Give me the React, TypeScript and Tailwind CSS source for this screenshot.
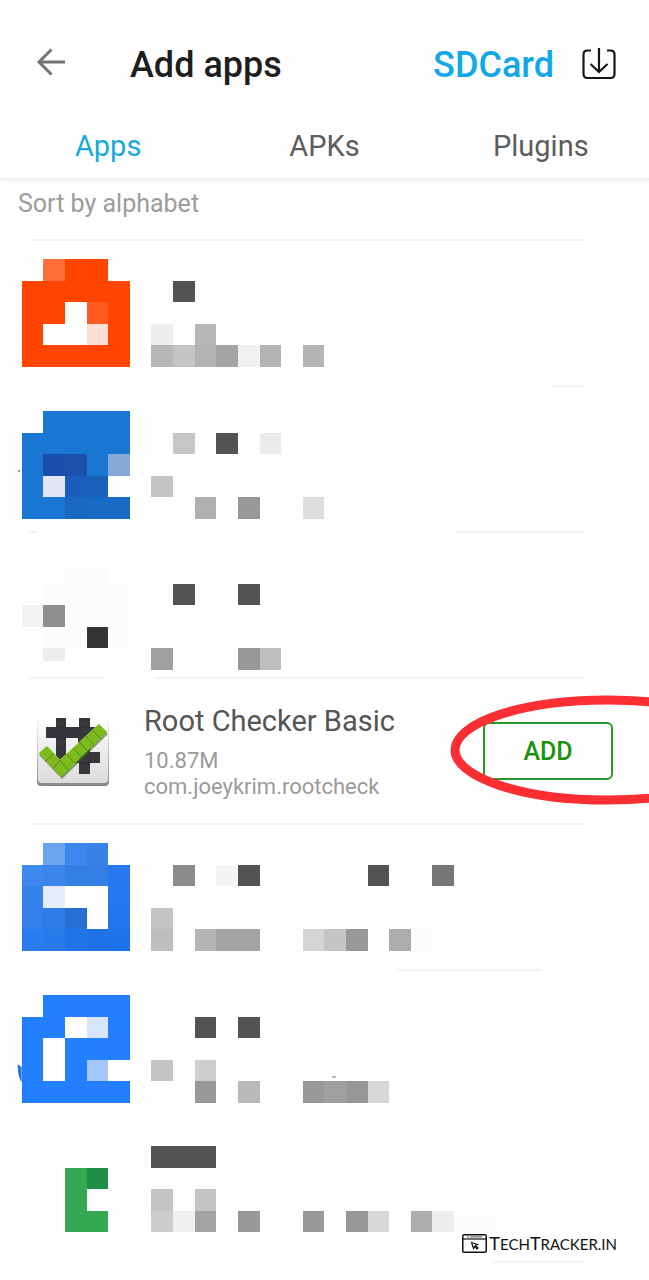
import React from "react";

type Cell = [col: number, row: number, fill: string, w?: number, h?: number];

type AppEntry = {
  id: string;
  pad: string;
  icon: Cell[];
  label: Cell[];
  divider: string;
  leadDivider?: string;
  nub?: string;
};

const CELL = 21.62;
const DARK = "#535353";
const ORANGE = "#ff4500";
const BLUE = "#1976d2";
const AZURE = "#237ffe";
const GREEN = "#34a853";

const firstApps: AppEntry[] = [
  {
    id: "a1",
    pad: "pt-[18px]",
    icon: [
      [1, 0, "#ff7038"], [2, 0, ORANGE, 2], [0, 1, ORANGE, 5, 4],
      [2, 2, "#fff"], [3, 2, "#ff5a1f"], [1, 3, "#fff", 2], [3, 3, "#fddfd6"],
    ],
    label: [
      [1, 1, DARK], [0, 3, "#eeeeee"], [2, 3, "#b7b7b7"],
      [0, 4, "#b7b7b7"], [1, 4, "#c4c4c4"], [2, 4, "#b3b3b3"], [3, 4, "#a3a3a3"],
      [4, 4, "#f1f1f1"], [5, 4, "#b5b5b5"], [7, 4, "#b5b5b5"],
    ],
    divider: "ml-auto w-8",
  },
  {
    id: "a2",
    pad: "pt-6",
    icon: [
      [1, 0, BLUE, 4], [0, 1, BLUE, 5, 4],
      [1, 2, "#1c4eae"], [2, 2, "#1b51ad"], [4, 2, "#88a8d8"],
      [1, 3, "#e3e7f5"], [2, 3, "#1b5eba"], [3, 3, "#1b60b9"], [4, 3, "#fefefe"],
      [2, 4, "#1a68c0"], [3, 4, "#196ac4", 2],
    ],
    label: [
      [1, 1, "#c6c6c6"], [3, 1, DARK], [5, 1, "#ebebeb"], [0, 3, "#c4c4c4"],
      [2, 4, "#b0b0b0"], [4, 4, "#989898"], [7, 4, "#dedede"],
    ],
    leadDivider: "w-2",
    divider: "ml-auto w-32",
    nub: "M-3.5 59h1.5v2h-1.5z",
  },
  {
    id: "a3",
    pad: "pt-[29px]",
    icon: [
      [2, 0, "#fcfcfc", 2], [1, 1, "#fcfcfc", 4], [2, 2, "#fcfcfc", 3],
      [1, 3, "#fcfcfc", 4], [0, 2, "#f3f3f3"], [1, 2, "#8e8e8e"],
      [3, 3, "#333333"], [1, 4, "#ededed", 1, 0.6],
    ],
    label: [
      [1, 1, DARK], [4, 1, DARK], [0, 4, "#a0a0a0"], [4, 4, "#989898"], [5, 4, "#bfbfbf"],
    ],
    leadDivider: "w-[74px]",
    divider: "ml-[53px] grow",
  },
];

const moreApps: AppEntry[] = [
  {
    id: "b1",
    pad: "pt-[18px]",
    icon: [
      [1, 0, "#6ba5f2"], [2, 0, "#3d88ec"], [3, 0, "#3781e9"],
      [0, 1, "#3d88ee"], [1, 1, "#3c85ea"], [2, 1, "#337fe6", 2], [4, 1, "#2678ef"],
      [0, 2, "#3681ea"], [1, 2, "#e7eefb"], [2, 2, "#fff", 2], [4, 2, "#2477ee"],
      [0, 3, "#3381ea"], [1, 3, "#2e7ce5"], [2, 3, "#276fd5"], [3, 3, "#fff"], [4, 3, "#2176ec"],
      [0, 4, "#2a7cee"], [1, 4, "#2a79ea"], [2, 4, "#2273e6"], [3, 4, "#2072e7"], [4, 4, "#1d73e9"],
    ],
    label: [
      [1, 1, "#8c8c8c"], [3, 1, "#f5f5f5"], [4, 1, DARK], [10, 1, DARK], [13, 1, "#777777"],
      [0, 3, "#c4c4c4"], [0, 4, "#bebebe"], [2, 4, "#b5b5b5"], [3, 4, "#a3a3a3", 2],
      [7, 4, "#d5d5d5"], [8, 4, "#c5c5c5"], [9, 4, "#989898"], [11, 4, "#adadad"], [12, 4, "#fcfcfc"],
    ],
    divider: "ml-auto mr-[43px] w-36",
  },
  {
    id: "b2",
    pad: "pt-6",
    icon: [
      [1, 0, AZURE, 4], [0, 1, AZURE, 5, 4],
      [2, 1, "#fff"], [3, 1, "#d7e5fb"], [1, 2, "#fff", 1, 2], [3, 3, "#a4c7fa"], [4, 3, "#fefefe"],
    ],
    label: [
      [2, 1, DARK], [4, 1, DARK], [0, 3, "#c4c4c4"], [2, 3, "#cecece"],
      [2, 4, "#989898"], [4, 4, "#b9b9b9"], [7, 4, "#989898"], [8, 4, "#a0a0a0"],
      [9, 4, "#979797"], [10, 4, "#d8d8d8"], [8.35, 3.75, "#b8b8b8", 0.2, 0.08],
    ],
    divider: "invisible w-0",
    nub: "M-4 69 L-1 71.500 H0 V87 C-3 84 -4 76 -4 69Z",
  },
  {
    id: "b3",
    pad: "pt-[29px]",
    icon: [
      [2, 1, GREEN, 1, 3], [3, 1, "#1f8e42"], [3, 3, GREEN],
    ],
    label: [
      [0, 0, DARK, 3], [0, 2, "#c4c4c4"], [2, 2, "#c4c4c4"],
      [0, 3, "#cdcdcd"], [1, 3, "#f0f0f0"], [2, 3, "#a3a3a3"], [4, 3, "#989898"],
      [7, 3, "#989898"], [9, 3, "#989898"], [10, 3, "#d8d8d8"], [12, 3, "#aeaeae"],
      [13, 3, "#ededed"], [14, 3, "#fcfcfc", 2],
    ],
    divider: "ml-auto w-[91px]",
  },
];

function Cells({ cells }: { cells: Cell[] }) {
  return (
    <g shapeRendering="crispEdges">
      {cells.map(([c, r, fill, w = 1, h = 1], i) => (
        <rect key={i} x={c * CELL} y={r * CELL} width={w * CELL} height={h * CELL} fill={fill} />
      ))}
    </g>
  );
}

function Divider({ lead, main }: { lead?: string; main: string }) {
  return (
    <div className="mr-[65px] ml-[29px] flex h-[2px]" aria-hidden="true">
      {lead && <span className={`bg-[#f3f3f3] ${lead}`} />}
      <span className={`bg-[#f3f3f3] ${main}`} />
    </div>
  );
}

function HiddenApp({ app }: { app: AppEntry }) {
  return (
    <li>
      <div className={`flex h-36 items-start gap-[21px] px-[22px] ${app.pad}`}>
        <svg className="size-[108px] shrink-0 overflow-visible" viewBox="0.3 0 108 108" aria-hidden="true">
          <Cells cells={app.icon} />
          {app.nub && <path d={app.nub} fill={app.id === "b2" ? "#2a78dc" : "#777"} />}
        </svg>
        <svg className="h-[108px] w-[346px] shrink-0" viewBox="-0.4 0 346 108" aria-hidden="true">
          <Cells cells={app.label} />
        </svg>
      </div>
      <Divider lead={app.leadDivider} main={app.divider} />
    </li>
  );
}

function RootCheckIcon() {
  return (
    <svg className="size-[74px] shrink-0" viewBox="0 0 74 74" aria-hidden="true">
      <defs>
        <linearGradient id="tile" x1="0" y1="0" x2="0" y2="1">
          <stop offset="0" stopColor="#ffffff" />
          <stop offset="1" stopColor="#dcdcdc" />
        </linearGradient>
        <linearGradient id="side" x1="0" y1="0" x2="0" y2="1">
          <stop offset="0" stopColor="#fafafa" />
          <stop offset="0.5" stopColor="#c8c8c8" />
          <stop offset="1" stopColor="#858585" />
        </linearGradient>
      </defs>
      <path d="M1 1H73V68Q73 72 69 72H5Q1 72 1 68Z" fill="url(#side)" />
      <path d="M2 1H72V65Q72 69 68 69H6Q2 69 2 65Z" fill="url(#tile)" />
      <path
        fillRule="evenodd"
        d="M20 4H30V13H43V4H54V13H62V24H54V38H64V49H54V60H43V49H20V24H10V13H20ZM30 24V40H42V24Z"
        fill="#35373b"
      />
      <path d="M20 13H30M43 13H54M20 24H30M20 34H30M43 49H54M54 38V49" stroke="#2a2c30" strokeWidth="0.700" />
      <path d="M3 41L11 33L25 48L63 12L72 20L26 65Z" fill="#3d6a10" opacity="0.600" />
      <path d="M3 39L11 32L24 46L63 10L71 18L25 63Z" fill="#7dba1d" />
      <path d="M11 32L24 46L63 10" fill="none" stroke="#a0d444" strokeWidth="0.800" />
      <g stroke="#558c15" strokeWidth="1">
        <path d="M10 47L17.500 39M17 54.500L24 46" />
        <path d="M24 46l8.500 10M30.500 40l8.500 9.500M37 34l8.500 9M43.500 28l8 9M50 22l8 9M56.500 16l8 8.500" />
      </g>
    </svg>
  );
}

export default function App() {
  return (
    <main className="relative min-h-screen overflow-x-hidden bg-[#fefefe] font-[Roboto,sans-serif]">
      <header className="border-b-2 border-[#efefef] shadow-[0_1px_3px_rgba(0,0,0,0.06)]">
        <div className="flex h-[114px] items-center pt-[14px] pr-[33px] pl-9">
          <button type="button" aria-label="Back" className="mr-[65px] shrink-0 pb-1">
            <svg className="h-7 w-[29px]" viewBox="0 0 29 28" fill="none" stroke="#747474" strokeWidth="3" aria-hidden="true">
              <path d="M29 14H3M15.500 1.500L3 14L15.500 26.500" />
            </svg>
          </button>
          <h1 className="pt-[2px] text-[36px] leading-[44px] font-medium text-[#1e1e1e]">Add apps</h1>
          <button type="button" className="ml-auto pt-[2px] text-[36px] leading-[44px] font-medium text-[#12a7e8]">
            SDCard
          </button>
          <button type="button" aria-label="Download" className="ml-7 shrink-0">
            <svg className="h-8 w-[34px]" viewBox="0 0 34 32" fill="none" stroke="#161616" strokeWidth="2.200" aria-hidden="true">
              <path d="M9 2.500H5.500Q1.500 2.500 1.500 6.500V26Q1.500 30 5.500 30H28.500Q32.500 30 32.500 26V6.500Q32.500 2.500 28.500 2.500H25" />
              <path d="M17 0V24M8.500 16L17 24L25.500 16" />
            </svg>
          </button>
        </div>
        <nav className="grid h-16 grid-cols-3 text-center text-[29px] leading-[64px] text-[#5c5c5c]">
          <a href="#apps" className="text-[#18a9db]">Apps</a>
          <a href="#apks">APKs</a>
          <a href="#plugins">Plugins</a>
        </nav>
      </header>

      <p className="h-[59px] px-[18px] pt-2 text-[25px] leading-8 text-[#9c9c9c]">Sort by alphabet</p>
      <Divider main="grow" />

      <ul>
        {firstApps.map((app) => (
          <HiddenApp key={app.id} app={app} />
        ))}
        <li>
          <div className="relative flex h-36 items-center pr-9 pl-9">
            <RootCheckIcon />
            <div className="ml-[34px]">
              <h2 className="text-[29px] leading-[38px] text-[#555555]">Root Checker Basic</h2>
              <p className="pt-2 text-[22px] leading-[26px] text-[#9b9b9b]">10.87M</p>
              <p className="text-[22px] leading-[26px] text-[#9b9b9b]">com.joeykrim.rootcheck</p>
            </div>
            <button
              type="button"
              className="ml-auto h-[58px] w-[130px] rounded-md border-2 border-[#2a962a] pt-[2px] text-[25px] font-medium text-[#1c930f]"
            >
              ADD
            </button>
            <svg
              className="pointer-events-none absolute top-[14px] right-0 h-[114px] w-[200px]"
              viewBox="0 0 200 114"
              fill="none"
              aria-hidden="true"
            >
              <ellipse cx="158" cy="57" rx="152" ry="50" stroke="#fb2e34" strokeWidth="9" />
            </svg>
          </div>
          <Divider main="grow" />
        </li>
        {moreApps.map((app) => (
          <HiddenApp key={app.id} app={app} />
        ))}
      </ul>

      <div className="absolute right-8 bottom-[26px] flex items-center gap-[2px] text-[#111]">
        <svg className="h-[19px] w-[25px]" viewBox="0 0 25 19" fill="none" stroke="#111" aria-hidden="true">
          <rect x="0.750" y="0.750" width="23.500" height="17.500" rx="1.500" strokeWidth="1.500" />
          <path d="M1 5H24" strokeWidth="1.200" />
          <path d="M5 2.900H7M8 2.900H20" strokeWidth="1.400" stroke="#777" />
          <path d="M9.500 8.500L15.500 10.500L13.500 11.500L16 14L15 15L12.500 12.500L11.500 14.500Z" strokeWidth="1.200" />
        </svg>
        <span className="font-[Lato,sans-serif] text-[18px] leading-5">
          T<span className="text-[15px]">ECH</span>T<span className="text-[15px]">RACKER.IN</span>
        </span>
      </div>
    </main>
  );
}
